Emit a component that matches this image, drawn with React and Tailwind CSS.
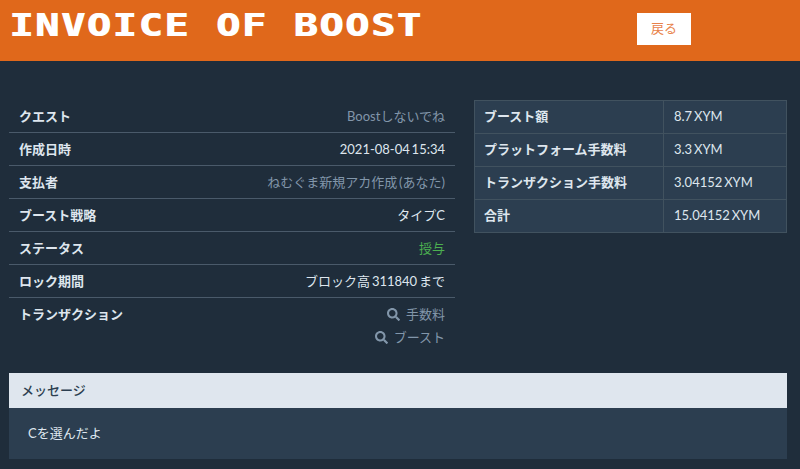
import { FaSearch } from 'react-icons/fa';

const FONT = 'font-["Lato","Noto_Sans_CJK_JP",sans-serif]';

const RIGHT_ROWS = [
  ['ブースト額', '8.7 XYM'],
  ['プラットフォーム手数料', '3.3 XYM'],
  ['トランザクション手数料', '3.04152 XYM'],
  ['合計', '15.04152 XYM'],
];

function Row({ label, children, last }) {
  return (
    <div className={`flex justify-between px-[10px] pt-[7px] leading-[18px] ${last ? 'h-[58px]' : 'h-[33px] border-b border-[#4a5a6a]'}`}>
      <div className="font-bold text-[#dee6ee]">{label}</div>
      <div className="text-right">{children}</div>
    </div>
  );
}

function TxLink({ children }) {
  return (
    <div className="flex items-center justify-end gap-[6px] h-[18px] mb-[5px] text-[#8296aa]">
      <FaSearch className="text-[13px]" />
      <span>{children}</span>
    </div>
  );
}

export default function App() {
  return (
    <div className={`${FONT} [word-spacing:-1.5px] bg-[#1f2d3b] h-[469px] overflow-hidden text-[13px] text-[#dee6ee]`}>
      <header className="flex h-[61px] bg-[#e0681b]">
        <div className="w-[637px] pl-[9px] pt-[6px]">
          <h1 className='origin-left scale-x-[1.25] font-["DejaVu_Sans_Mono"] font-bold text-[32px] leading-[38px] tracking-[1.4px] [word-spacing:0] [text-shadow:1px_0_0_white] text-white whitespace-nowrap'>
            INVOICE OF BOOST
          </h1>
        </div>
        <button className="mt-[13px] w-[54px] h-[32px] bg-white text-[#e8824a] text-[13px]">戻る</button>
      </header>

      <main className="flex items-start pt-[39px] pl-[9px] pr-[13px] gap-[19px]">
        <div className="w-[446px]">
          <Row label="クエスト"><span className="text-[#8296aa]">Boostしないでね</span></Row>
          <Row label="作成日時">2021-08-04 15:34</Row>
          <Row label="支払者"><span className="text-[#8296aa]">ねむぐま新規アカ作成 (あなた)</span></Row>
          <Row label="ブースト戦略">タイプC</Row>
          <Row label="ステータス"><span className="text-[#4caf50]">授与</span></Row>
          <Row label="ロック期間">ブロック高 311840 まで</Row>
          <Row label="トランザクション" last>
            <TxLink>手数料</TxLink>
            <TxLink>ブースト</TxLink>
          </Row>
        </div>

        <table className="w-[313px] border-collapse bg-[#2c3e50] table-fixed">
          <tbody>
            {RIGHT_ROWS.map(([k, v]) => (
              <tr key={k} className="h-[33px]">
                <td className="w-[189px] border border-[#41525f] px-[9px] font-bold text-[#dee6ee]">{k}</td>
                <td className="border border-[#41525f] px-[10px]">{v}</td>
              </tr>
            ))}
          </tbody>
        </table>
      </main>

      <section className="mt-[17px] ml-[9px] w-[778px]">
        <div className="h-[35px] bg-[#dfe6ee] pl-[12px] flex items-center font-medium text-[#2c3e50]">メッセージ</div>
        <div className="h-[51px] bg-[#2c3e50] px-[19px] pt-[15px] leading-[20px]">Cを選んだよ</div>
      </section>
    </div>
  );
}
